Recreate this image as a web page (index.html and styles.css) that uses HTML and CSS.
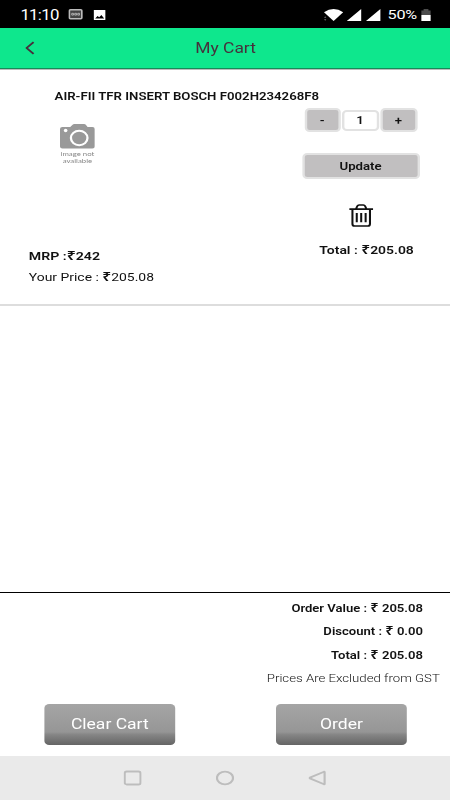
FILE: index.html
```html
<!DOCTYPE html>
<html lang="en">
<head>
    <meta charset="UTF-8">
    <meta name="viewport" content="width=device-width, initial-scale=1.0">
    <title>My Cart</title>
    <link rel="stylesheet" href="styles.css">
</head>
<body>
    <div class="screen">
        <div class="status-bar">
            <span class="time">11:10</span>
            <svg class="icon-keyboard" width="12" height="11" viewBox="0 0 12 11">
                <rect x=".75" y=".75" width="10.5" height="9" rx="1" fill="#444" stroke="#bbb" stroke-width="1.5"/>
                <path d="M2.8 4.3h1.4v1.8H2.8zM5.3 4.3h1.4v1.8H5.3zM7.8 4.3h1.4v1.8H7.8z" fill="none" stroke="#ccc" stroke-width=".7"/>
            </svg>
            <svg class="icon-image" width="10" height="10" viewBox="0 0 10 10">
                <rect width="10" height="10" rx=".6" fill="#fff"/>
                <path d="M1.3 8.4 3.3 5.9 4.7 7.3 6.5 5.1 8.8 8.4z" fill="#000"/>
            </svg>
            <div class="status-right">
                <svg width="48" height="12" viewBox="0 0 48 12">
                    <path d="M0 3.2Q8-3.2 16 3.2L8 12z" fill="#fff"/>
                    <path d="M0 9 1 7l1 2zM0 10l1 2 1-2z" fill="#555"/>
                    <path d="M19 12 31 0v12zM35 12 47 0v12z" fill="#fff"/>
                </svg>
                <span class="battery-text">50%</span>
                <svg width="8" height="12" viewBox="0 0 8 12">
                    <path d="M0 1.5h2V0h4v1.5h2V6H0z" fill="#4c4c4c"/>
                    <path d="M0 6h8v6H0z" fill="#fff"/>
                </svg>
            </div>
        </div>

        <div class="header">
            <svg class="back" width="8" height="14" viewBox="0 0 8 14">
                <path d="M7 1.2 1.2 7 7 12.8" fill="none" stroke="#46303c" stroke-width="1.7"/>
            </svg>
            <span class="title">My Cart</span>
        </div>

        <div class="cart-item">
            <div class="item-name">AIR-FII TFR INSERT BOSCH F002H234268F8</div>
            <div class="item-body">
                <div class="item-left">
                    <div class="no-image">
                        <svg width="29" height="25" viewBox="0 0 29 25">
                            <path d="M2 3h6.5L10.5.8Q11 0 12 0h8q1 0 1.5.8L23 3h4q2 0 2 2v17.5q0 2-2 2H2q-2 0-2-2V5q0-2 2-2z" fill="#999"/>
                            <ellipse cx="16" cy="14" rx="6.9" ry="7.2" fill="#999" stroke="#fff" stroke-width="1.9"/>
                            <ellipse cx="4.7" cy="6.5" rx="1.5" ry="1.7" fill="#fff"/>
                        </svg>
                        <span>image not</span>
                        <span>available</span>
                    </div>
                    <div class="mrp">MRP :<span class="rupee">₹</span>242</div>
                    <div class="price">Your Price : <span class="rupee">₹</span>205.08</div>
                </div>
                <div class="item-right">
                    <div class="quantity">
                        <button class="step">-</button>
                        <span class="count">1</span>
                        <button class="step plus">+</button>
                    </div>
                    <button class="update">Update</button>
                    <svg class="trash" width="20" height="24" viewBox="0 0 20 24">
                        <path d="M0 5.2h20M5.6 5l1.2-3q.4-1 1.4-1h3.6q1 0 1.4 1l1.2 3M2.7 5.2V20q0 2 1.8 2h11q1.8 0 1.8-2V5.2" fill="none" stroke="#111" stroke-width="1.7"/>
                        <path d="M6.3 9v9.3M10 9v9.3M13.7 9v9.3" stroke="#111" stroke-width="1.7"/>
                    </svg>
                    <div class="item-total">Total : <span class="rupee">₹</span>205.08</div>
                </div>
            </div>
        </div>

        <div class="summary">
            <div class="summary-row">Order Value : <span class="rupee">₹</span> 205.08</div>
            <div class="summary-row">Discount : <span class="rupee">₹</span> 0.00</div>
            <div class="summary-row">Total : <span class="rupee">₹</span> 205.08</div>
            <div class="note">Prices Are Excluded from GST</div>
            <div class="actions">
                <button class="action">Clear Cart</button>
                <button class="action">Order</button>
            </div>
        </div>

        <div class="nav-bar">
            <svg width="15" height="16" viewBox="0 0 15 16">
                <rect x=".9" y="1.5" width="13.2" height="13" rx="1.8"/>
            </svg>
            <svg width="15" height="16" viewBox="0 0 15 16">
                <ellipse cx="7.5" cy="8" rx="6.7" ry="6.4"/>
            </svg>
            <svg width="15" height="16" viewBox="0 0 15 16">
                <path d="M13.5 2v12q0 .5-.5.3L1.3 8.4q-.6-.4 0-.8L13 1.7q.5-.2.5.3z"/>
            </svg>
        </div>
    </div>
</body>
</html>
```
FILE: styles.css
```css
* {
    box-sizing: border-box;
}
body {
    margin: 0;
    overflow: hidden;
    background-color: #fff;
    font-family: Roboto, "Liberation Sans", sans-serif;
    color: #111;
}
.screen {
    display: flex;
    flex-direction: column;
    width: 375px;
    height: 800px;
    transform: scaleX(1.2);
    transform-origin: 0 0;
}
svg {
    display: block;
}
button {
    padding: 0;
    font-family: inherit;
    color: inherit;
}
.rupee {
    font-family: "Noto Sans", sans-serif;
    font-size: 1.12em;
    font-weight: 600;
    line-height: 1;
}
.status-bar {
    display: flex;
    align-items: center;
    height: 28px;
    padding: 1px 16px 0 17px;
    background-color: #000;
    color: #fff;
    font-size: 14px;
}
.time {
    width: 39.5px;
    letter-spacing: -0.6px;
}
.icon-keyboard,
.icon-image {
    flex: none;
}
.icon-keyboard {
    width: 12px;
    margin-right: 9px;
}
.status-right {
    display: flex;
    align-items: center;
    margin-left: auto;
}
.battery-text {
    width: 27px;
    margin-left: 5.5px;
    margin-right: 1px;
    font-size: 13.5px;
    line-height: 16px;
    padding-bottom: 1px;
    letter-spacing: -0.2px;
}
.header {
    display: grid;
    grid-template-columns: 60px 1fr 60px;
    align-items: center;
    height: 41px;
    background-color: #0ee78d;
    border-bottom: 1px solid #168a5a;
    box-shadow: 0 1px 0 #bbb;
}
.back {
    margin-left: 21px;
}
.title {
    padding-left: 1px;
    text-align: center;
    font-size: 14.5px;
    color: #46303c;
}
.cart-item {
    height: 237px;
    padding-top: 19px;
    border-bottom: 2px solid #ddd;
}
.item-name {
    padding-left: 45.5px;
    font-size: 11px;
    font-weight: 600;
    line-height: 18px;
}
.item-body {
    display: flex;
    justify-content: space-between;
    padding: 2px 25.5px 0 24px;
}
.no-image {
    display: flex;
    flex-direction: column;
    align-items: center;
    width: 29px;
    height: 122px;
    margin: 16px 0 0 26px;
    font-family: Lato, sans-serif;
    font-size: 6.5px;
    line-height: 6.5px;
    white-space: nowrap;
    color: #888;
}
.no-image svg {
    margin-bottom: 2px;
}
.mrp {
    font-size: 11.8px;
    font-weight: 600;
    line-height: 20px;
}
.price {
    font-size: 11.6px;
    line-height: 22px;
}
.item-right {
    display: flex;
    flex-direction: column;
    align-items: center;
    width: 98px;
}
.quantity {
    display: flex;
    align-items: center;
    gap: 1px;
    font-size: 11px;
    font-weight: 600;
}
.step {
    width: 30px;
    height: 24px;
    background-color: #c1bfc0;
    border: 2px solid #e2e2e2;
    border-radius: 4px;
    font-size: 11px;
    font-weight: 600;
}
.plus {
    width: 31px;
}
.count {
    width: 31px;
    height: 21px;
    border: 2px solid #e2e2e2;
    border-radius: 4px;
    line-height: 17px;
    text-align: center;
}
.update {
    width: 98px;
    height: 26px;
    margin-top: 21px;
    background-color: #c1bfc0;
    border: 2px solid #e2e2e2;
    border-radius: 4px;
    font-size: 11px;
    font-weight: 600;
}
.trash {
    margin-top: 25px;
}
.item-total {
    margin: 13px 0 0 10px;
    font-size: 11.6px;
    font-weight: 600;
    line-height: 18px;
}
.summary {
    height: 164px;
    margin-top: auto;
    padding-top: 4px;
    border-top: 1px solid #000;
    text-align: right;
}
.summary-row {
    padding-right: 22.5px;
    font-size: 10.9px;
    font-weight: 600;
    line-height: 23.3px;
}
.note {
    padding-right: 8.5px;
    font-size: 11px;
    font-weight: 300;
    line-height: 24px;
}
.actions {
    display: flex;
    justify-content: space-between;
    padding: 13px 36px 0 37px;
}
.action {
    width: 109px;
    height: 41px;
    background: linear-gradient(#a5a5a5, #969696 68%, #858585 75%, #656565);
    border: none;
    border-radius: 4px;
    font-size: 14.6px;
    color: #fff;
}
.nav-bar {
    display: flex;
    align-items: center;
    justify-content: center;
    gap: 62px;
    height: 44px;
    background-color: #eaeaea;
}
.nav-bar svg {
    fill: none;
    stroke: #bdbdbd;
    stroke-width: 1.8;
}
```
